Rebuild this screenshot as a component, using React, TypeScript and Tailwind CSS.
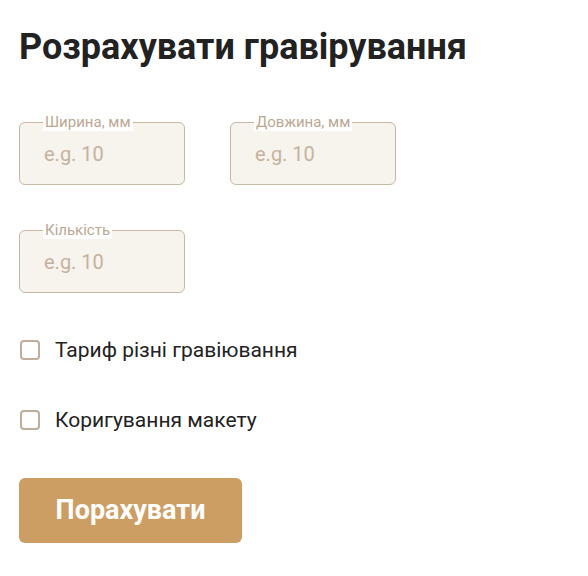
import React from 'react';

function Field({ label }: { label: string }) {
  return (
    <label className="relative block w-[166px]">
      <span className="absolute -top-[9px] left-[24px] bg-white px-[2px] text-[15px] leading-[18px] text-[#bba894]">
        {label}
      </span>
      <input
        type="text"
        placeholder="e.g. 10"
        className="h-[63px] w-full rounded-[6px] border border-[#c9b8a5] bg-[#f7f3ed] px-[24px] text-[20px] text-[#333] placeholder:text-[#c5b29e] focus:outline-none"
      />
    </label>
  );
}

function Check({ label }: { label: string }) {
  return (
    <label className="flex h-[28px] items-center gap-[15px]">
      <span className="h-[20px] w-[20px] rounded-[4px] border-2 border-[#bfae9c] bg-white" />
      <span className="text-[21px] leading-[28px] text-[#222]">{label}</span>
    </label>
  );
}

export default function App() {
  const [checks] = React.useState(['Тариф різні гравіювання', 'Коригування макету']);

  return (
    <div className="min-h-screen bg-white px-[19px] pt-[24px] font-['Roboto',sans-serif]">
      <h1 className="text-[36px] font-bold leading-[46px] text-[#222]">Розрахувати гравірування</h1>

      <div className="mt-[52px] flex gap-[45px]">
        <Field label="Ширина, мм" />
        <Field label="Довжина, мм" />
      </div>
      <div className="mt-[45px]">
        <Field label="Кількість" />
      </div>

      <div className="mt-[43px] flex flex-col gap-[42px] pl-[1px]">
        {checks.map((c) => (
          <Check key={c} label={c} />
        ))}
      </div>

      <button
        type="button"
        className="mt-[44px] h-[65px] w-[223px] rounded-[6px] bg-[#cd9e63] text-[27px] font-bold text-white"
      >
        Порахувати
      </button>
    </div>
  );
}
